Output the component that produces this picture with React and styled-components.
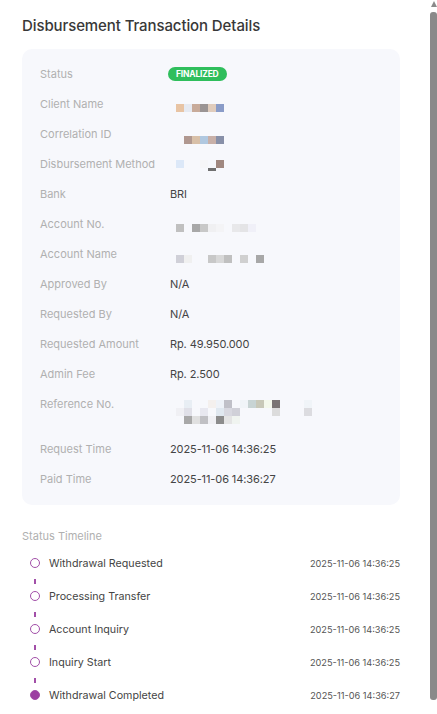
import React from "react";
import styled, { createGlobalStyle } from "styled-components";

const GlobalStyle = createGlobalStyle`
  html, body {
    margin: 0;
    padding: 0;
    overflow: hidden;
    background: #ffffff;
  }
  body {
    font-family: Inter, "Liberation Sans", sans-serif;
  }
`;

const details = [
  { label: "Status", badge: "FINALIZED" },
  {
    label: "Client Name",
    mosaic: {
      top: 7,
      rows: 1,
      cells: [
        [1, 0, "#e8c4a4"],
        [2, 0, "#e6eaf2"],
        [3, 0, "#c8ab9a"],
        [4, 0, "#9a9494"],
        [5, 0, "#e0ccbc"],
        [6, 0, "#8a9cc8"],
      ],
    },
  },
  {
    label: "Correlation ID",
    mosaic: {
      top: 9,
      rows: 1,
      cells: [
        [2, 0, "#b09890"],
        [3, 0, "#d8c0a8"],
        [4, 0, "#b0c8e0"],
        [5, 0, "#c8b0a8"],
        [6, 0, "#8890a8"],
      ],
    },
  },
  {
    label: "Disbursement Method",
    mosaic: {
      top: 3,
      rows: 2,
      cells: [
        [1, 0, "#dce8f8"],
        [4, 0, "#f6f6f8"],
        [6, 0, "#a08880"],
        [5, 1, "#707070", 3],
      ],
    },
  },
  { label: "Bank", text: "BRI" },
  {
    label: "Account No.",
    mosaic: {
      top: 7,
      rows: 1,
      cells: [
        [1, 0, "#c0c0c0"],
        [3, 0, "#a8a8a8"],
        [4, 0, "#c8c8c8"],
        [5, 0, "#f0f0f2"],
        [6, 0, "#f4f4f6"],
        [8, 0, "#e8e8ea"],
        [9, 0, "#e4e4e6"],
        [10, 0, "#f0f0f8"],
      ],
    },
  },
  {
    label: "Account Name",
    mosaic: {
      top: 8,
      rows: 1,
      cells: [
        [1, 0, "#d0d0d8"],
        [2, 0, "#f0f0f0"],
        [5, 0, "#c8c8c8"],
        [6, 0, "#d8d8d8"],
        [7, 0, "#c0c0c0"],
        [9, 0, "#d0d0d0"],
        [11, 0, "#a8a8a8"],
      ],
    },
  },
  { label: "Approved By", text: "N/A" },
  { label: "Requested By", text: "N/A" },
  { label: "Requested Amount", text: "Rp. 49.950.000" },
  { label: "Admin Fee", text: "Rp. 2.500" },
  {
    label: "Reference No.",
    height: 29,
    mosaic: {
      top: 3,
      rows: 3,
      cells: [
        [2, 0, "#e8eef4"],
        [5, 0, "#f4f0ee"],
        [6, 0, "#eef2f8"],
        [7, 0, "#c0c0c8"],
        [9, 0, "#f0f4f8"],
        [10, 0, "#c8d4d4"],
        [11, 0, "#c8c8b8"],
        [12, 0, "#f4f8ec"],
        [13, 0, "#7a7474"],
        [17, 0, "#f0f4f8"],
        [1, 1, "#f0f0f4"],
        [2, 1, "#e0e0e8"],
        [4, 1, "#e8e8f0"],
        [6, 1, "#e0e8f0"],
        [7, 1, "#d8d8e0"],
        [8, 1, "#d0d0d8"],
        [13, 1, "#dcdcdc"],
        [17, 1, "#dcdce0"],
        [2, 2, "#a8a8a8"],
        [3, 2, "#e0e0e0"],
        [4, 2, "#c0c0c4"],
        [5, 2, "#f0f0f4"],
        [6, 2, "#8c8c8c"],
        [7, 2, "#e4e4e4"],
        [8, 2, "#f0f4f0"],
      ],
    },
  },
  { label: "Request Time", text: "2025-11-06 14:36:25" },
  { label: "Paid Time", text: "2025-11-06 14:36:27" },
];

const steps = [
  { name: "Withdrawal Requested", time: "2025-11-06 14:36:25" },
  { name: "Processing Transfer", time: "2025-11-06 14:36:25" },
  { name: "Account Inquiry", time: "2025-11-06 14:36:25" },
  { name: "Inquiry Start", time: "2025-11-06 14:36:25" },
  { name: "Withdrawal Completed", time: "2025-11-06 14:36:27", done: true },
];

function App() {
  return (
    <>
      <GlobalStyle />
      <Page>
        <Content>
          <Title>Disbursement Transaction Details</Title>
          <Card>
            {details.map((d) => (
              <Row key={d.label}>
                <Label>{d.label}</Label>
                <Value>
                  {d.badge && <Badge>{d.badge}</Badge>}
                  {d.text}
                  {d.mosaic && (
                    <Mosaic
                      $top={d.mosaic.top}
                      $rows={d.mosaic.rows}
                      $h={d.height || 14}
                    >
                      {d.mosaic.cells.map(([c, r, color, h], i) => (
                        <Cell key={i} $c={c} $r={r} $color={color} $h={h} />
                      ))}
                    </Mosaic>
                  )}
                </Value>
              </Row>
            ))}
          </Card>

          <TimelineTitle>Status Timeline</TimelineTitle>
          <Timeline>
            {steps.map((s, i) => (
              <React.Fragment key={s.name}>
                {i > 0 && (
                  <Connector>
                    <Line />
                  </Connector>
                )}
                <Step>
                  <Dot $done={s.done} />
                  <StepName>{s.name}</StepName>
                  <StepTime>{s.time}</StepTime>
                </Step>
              </React.Fragment>
            ))}
          </Timeline>
        </Content>
        <ScrollBar>
          <Arrow />
          <Thumb />
        </ScrollBar>
      </Page>
    </>
  );
}

const Page = styled.div`
  display: flex;
  width: 437px;
  height: 714px;
  overflow: hidden;
`;

const Content = styled.div`
  flex: 1;
  padding: 16px 30px 0 22px;
  color: #3e3e3e;
`;

const Title = styled.h1`
  margin: 0 0 13px;
  font-size: 15px;
  line-height: 20px;
  font-weight: 500;
  color: #383838;
  letter-spacing: -0.1px;
`;

const Card = styled.div`
  background: #f7f8fc;
  border-radius: 10px;
  padding: 10px 18px 11px;
`;

const Row = styled.div`
  display: grid;
  grid-template-columns: 130px 1fr;
  padding: 8px 0;
  font-size: 11px;
  line-height: 14px;
`;

const Label = styled.div`
  color: #b0b0b0;
`;

const Value = styled.div`
  color: #444444;
  letter-spacing: -0.1px;
`;

const Badge = styled.span`
  display: inline-block;
  margin-left: -2px;
  padding: 0 8px;
  height: 14px;
  line-height: 14px;
  border-radius: 7px;
  background: #2fbe5c;
  color: #ffffff;
  font-size: 8.5px;
  font-weight: 700;
  letter-spacing: -0.2px;
  vertical-align: top;
`;

const Mosaic = styled.div`
  display: grid;
  grid-template-columns: repeat(24, 8px);
  grid-auto-rows: 8px;
  margin-left: -2px;
  margin-top: ${(p) => p.$top}px;
  margin-bottom: ${(p) => p.$h - p.$top - p.$rows * 8}px;
`;

const Cell = styled.span`
  grid-column: ${(p) => p.$c + 1};
  grid-row: ${(p) => p.$r + 1};
  align-self: start;
  height: ${(p) => p.$h || 8}px;
  background: ${(p) => p.$color};
`;

const TimelineTitle = styled.div`
  margin: 24px 0 10px;
  font-size: 11px;
  line-height: 14px;
  color: #b0b0b0;
`;

const Timeline = styled.div`
  display: flex;
  flex-direction: column;
`;

const Step = styled.div`
  display: flex;
  align-items: center;
  height: 20px;
  padding-left: 8px;
`;

const Dot = styled.span`
  width: 10px;
  height: 10px;
  box-sizing: border-box;
  border-radius: 50%;
  border: 1.3px solid #a24fa8;
  background: ${(p) => (p.$done ? "#9c3fa2" : "#ffffff")};
`;

const StepName = styled.span`
  flex: 1;
  margin-left: 9px;
  font-size: 10.7px;
  color: #444444;
`;

const StepTime = styled.span`
  font-size: 9.2px;
  color: #555555;
`;

const Connector = styled.div`
  height: 13px;
  padding-left: 12px;
`;

const Line = styled.div`
  width: 2px;
  height: 5px;
  margin-top: 6px;
  background: #a24fa8;
`;

const ScrollBar = styled.div`
  width: 7px;
  display: flex;
  flex-direction: column;
  align-items: center;
  padding: 1px 0 14px;
  gap: 5px;
`;

const Arrow = styled.div`
  width: 0;
  height: 0;
  border-left: 3.5px solid transparent;
  border-right: 3.5px solid transparent;
  border-bottom: 6px solid #8a8a8a;
`;

const Thumb = styled.div`
  flex: 1;
  align-self: stretch;
  background: #8a8a8a;
  border-radius: 3px;
`;

export default App;
